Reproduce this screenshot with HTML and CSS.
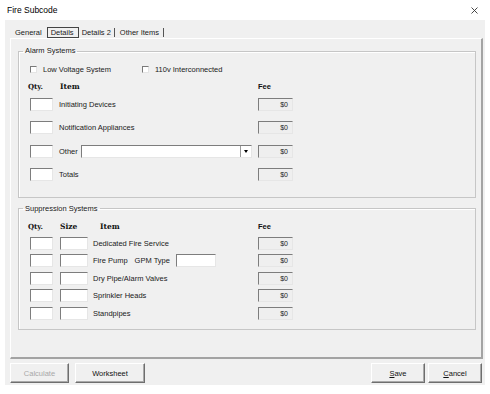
FILE: index.html
```html
<!DOCTYPE html>
<html lang="en">
<head>
    <meta charset="UTF-8">
    <title>Fire Subcode</title>
    <link rel="stylesheet" href="styles.css">
</head>
<body>
    <div class="titlebar">
        <span class="title">Fire Subcode</span>
        <svg class="close" width="7" height="7" viewBox="0 0 7 7">
            <path d="M0.5 0.5 L6.5 6.5 M6.5 0.5 L0.5 6.5" stroke="#333" stroke-width="0.9" fill="none"/>
        </svg>
    </div>
    <div class="dialog">
        <div class="tabs">
            <span class="tab general">General</span>
            <span class="tab active">Details</span>
            <span class="tab sep details2">Details 2</span>
            <span class="tab sep other-items">Other Items</span>
        </div>
        <div class="multipage">
            <fieldset class="frame alarm">
                <legend>Alarm Systems</legend>
                <div class="checks">
                    <label class="check first"><span class="checkbox"></span>Low Voltage System</label>
                    <label class="check"><span class="checkbox"></span>110v Interconnected</label>
                </div>
                <div class="row head">
                    <span class="qty hq">Qty.</span>
                    <span class="item wide hi">Item</span>
                    <span class="fee hf">Fee</span>
                </div>
                <div class="rows alarm-rows">
                    <div class="row">
                        <span class="qty box"></span>
                        <span class="item wide">Initiating Devices</span>
                        <span class="fee box money">$0</span>
                    </div>
                    <div class="row">
                        <span class="qty box"></span>
                        <span class="item wide">Notification Appliances</span>
                        <span class="fee box money">$0</span>
                    </div>
                    <div class="row">
                        <span class="qty box"></span>
                        <span class="item wide">Other <span class="combo"><span class="drop"></span></span></span>
                        <span class="fee box money">$0</span>
                    </div>
                    <div class="row">
                        <span class="qty box"></span>
                        <span class="item wide">Totals</span>
                        <span class="fee box money">$0</span>
                    </div>
                </div>
            </fieldset>
            <fieldset class="frame supp">
                <legend>Suppression Systems</legend>
                <div class="row head">
                    <span class="qty hq">Qty.</span>
                    <span class="size hs">Size</span>
                    <span class="item narrow hi supp-item">Item</span>
                    <span class="fee hf">Fee</span>
                </div>
                <div class="rows supp-rows">
                    <div class="row">
                        <span class="qty box"></span>
                        <span class="size box"></span>
                        <span class="item narrow">Dedicated Fire Service</span>
                        <span class="fee box money">$0</span>
                    </div>
                    <div class="row">
                        <span class="qty box"></span>
                        <span class="size box"></span>
                        <span class="item narrow">Fire Pump <span class="gpm">GPM Type</span> <span class="box gpm-box"></span></span>
                        <span class="fee box money">$0</span>
                    </div>
                    <div class="row">
                        <span class="qty box"></span>
                        <span class="size box"></span>
                        <span class="item narrow">Dry Pipe/Alarm Valves</span>
                        <span class="fee box money">$0</span>
                    </div>
                    <div class="row">
                        <span class="qty box"></span>
                        <span class="size box"></span>
                        <span class="item narrow">Sprinkler Heads</span>
                        <span class="fee box money">$0</span>
                    </div>
                    <div class="row">
                        <span class="qty box"></span>
                        <span class="size box"></span>
                        <span class="item narrow">Standpipes</span>
                        <span class="fee box money">$0</span>
                    </div>
                </div>
            </fieldset>
        </div>
        <div class="buttons">
            <button class="btn calc" disabled>Calculate</button>
            <button class="btn worksheet">Worksheet</button>
            <span class="spacer"></span>
            <button class="btn save"><u>S</u>ave</button>
            <button class="btn cancel"><u>C</u>ancel</button>
        </div>
    </div>
</body>
</html>
```
FILE: styles.css
```css
body {
    margin: 0;
    background: #fff;
    font-family: "Liberation Sans", Arial, sans-serif;
    font-size: 7.5px;
    color: #1a1a1a;
}
.titlebar {
    height: 20px;
    display: flex;
    align-items: center;
    justify-content: space-between;
    padding: 0 12px 0 7px;
}
.title {
    font-size: 8.5px;
    color: #000;
}
.close {
    display: block;
}
.dialog {
    margin: 0 5px;
    height: 365px;
    background: #f0f0f0;
    padding-top: 7px;
    box-sizing: border-box;
}
.tabs {
    height: 11px;
    display: flex;
    align-items: center;
    padding-left: 7px;
}
.tab {
    line-height: 9px;
    padding: 0 4px;
}
.tab.general {
    padding: 0 4px 0 3px;
    margin-right: 1px;
}
.tab.active {
    border: 1px solid #444;
    padding: 0 4px 0 3px;
}
.tab.details2 {
    padding: 0 3px;
}
.tab.other-items {
    padding: 0 4px 0 5px;
}
.tab.sep {
    border-right: 1px solid #555;
}
.multipage {
    margin-left: 5px;
    width: 473px;
    height: 321px;
    box-sizing: border-box;
    border-top: 1px solid #fff;
    border-left: 1px solid #fff;
    border-right: 2px solid #a3a3a3;
    border-bottom: 2px solid #a3a3a3;
    padding: 7px 5px 0 7px;
}
.frame {
    margin: 0;
    padding: 0;
    border: 1px solid #c6c6c6;
    box-shadow: inset 1px 1px 0 #fff;
    min-width: 0;
}
.frame legend {
    margin-left: 4px;
    padding: 0 2px;
    line-height: 10px;
}
.alarm {
    padding-bottom: 16px;
}
.supp {
    margin-top: 6px;
    padding-bottom: 9px;
}
.checks {
    display: flex;
    margin-top: 9px;
    margin-left: 11px;
    height: 8px;
    align-items: center;
}
.check {
    display: flex;
    align-items: center;
}
.check.first {
    width: 112px;
}
.checkbox {
    width: 7px;
    height: 7px;
    background: #fff;
    border: 1px solid;
    border-color: #7a7a7a #e4e4e4 #e4e4e4 #7a7a7a;
    box-sizing: border-box;
    margin-right: 6px;
}
.row {
    display: flex;
    align-items: center;
    height: 13px;
    margin-left: 11px;
}
.head {
    height: 9px;
    margin-top: 9px;
}
.supp .head {
    margin-top: 8px;
}
.rows {
    display: flex;
    flex-direction: column;
}
.alarm-rows {
    gap: 10.33px;
    margin-top: 7px;
}
.supp-rows {
    gap: 4.5px;
    margin-top: 6px;
}
.qty {
    width: 23px;
    flex: none;
}
.size {
    width: 28px;
    margin-left: 7px;
    flex: none;
}
.item {
    flex: none;
    display: flex;
    align-items: center;
    box-sizing: border-box;
}
.item.wide {
    width: 193px;
    margin-left: 6px;
}
.item.narrow {
    width: 159px;
    margin-left: 5px;
}
.fee {
    width: 35px;
    margin-left: 6px;
    flex: none;
}
.box {
    height: 13px;
    box-sizing: border-box;
    background: #fff;
    border: 1px solid;
    border-color: #7d7d7d #e6e6e6 #e6e6e6 #7d7d7d;
}
.money {
    background: #efefef;
    text-align: right;
    padding-right: 4px;
    line-height: 11px;
    font-size: 7px;
    color: #222;
}
.hq, .hs, .hi {
    font-family: "DejaVu Serif", "Liberation Serif", serif;
    font-weight: bold;
    font-size: 7.5px;
    color: #111;
}
.hq {
    text-indent: -2px;
    font-size: 7px;
}
.hi {
    padding-left: 1px;
}
.hi.supp-item {
    padding-left: 7px;
}
.hf {
    font-weight: bold;
    color: #111;
}
.combo {
    position: relative;
    flex: 1;
    height: 13px;
    margin-left: 3px;
    background: #fff;
    border: 1px solid;
    border-color: #7d7d7d #e6e6e6 #e6e6e6 #7d7d7d;
    box-sizing: border-box;
}
.drop {
    position: absolute;
    right: 0;
    top: 0;
    width: 11px;
    height: 11px;
    box-sizing: border-box;
    border-left: 1px solid #9a9a9a;
    background: #fff;
}
.drop::after {
    content: "";
    position: absolute;
    left: 3px;
    top: 4px;
    border-left: 2.5px solid transparent;
    border-right: 2.5px solid transparent;
    border-top: 3px solid #000;
}
.gpm {
    margin-left: 7px;
}
.gpm-box {
    width: 40px;
    margin-left: 6px;
}
.buttons {
    display: flex;
    margin-top: 4px;
    padding-left: 5px;
    padding-right: 3px;
}
.spacer {
    flex: 1;
}
.btn {
    height: 20px;
    margin: 0;
    padding: 0;
    background: #f0f0f0;
    border: 1px solid;
    border-color: #fff #6e6e6e #6e6e6e #fff;
    box-shadow: inset -1px -1px 0 #a9a9a9;
    font-family: "Liberation Sans", Arial, sans-serif;
    font-size: 7.5px;
    color: #111;
}
.calc {
    width: 59px;
    color: #a8a8a8;
}
.worksheet {
    width: 70px;
    margin-left: 6px;
}
.save {
    width: 54px;
}
.cancel {
    width: 54px;
    margin-left: 3px;
}
```
